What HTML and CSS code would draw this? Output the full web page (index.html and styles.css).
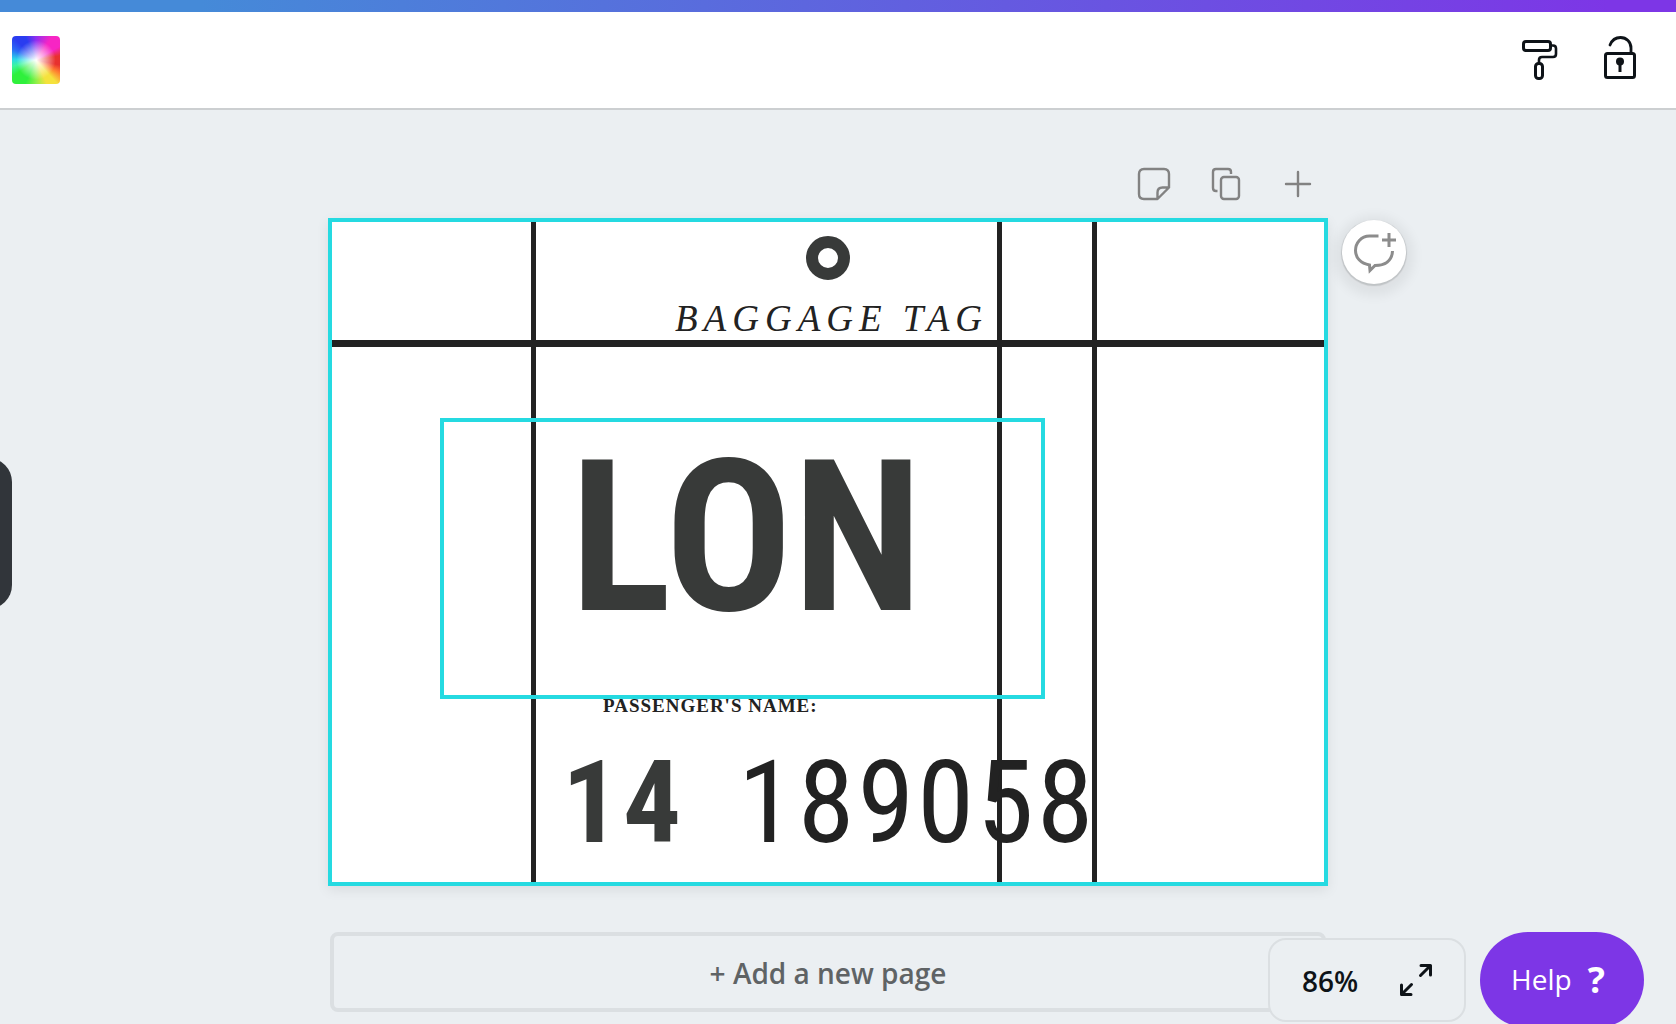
FILE: index.html
```html
<!DOCTYPE html>
<html lang="en">
<head>
  <meta charset="utf-8">
  <meta name="viewport" content="width=device-width, initial-scale=1">
  <title>Baggage tag</title>
  <link rel="stylesheet" href="styles.css">
</head>
<body>
  <div class="brand-bar"></div>
  <header class="toolbar">
    <button class="swatch" type="button" aria-label="Colour"></button>
    <div class="toolbar-actions">
      <button class="icon-button" type="button" aria-label="Copy style">
        <svg width="48" height="48" viewBox="0 0 48 48" fill="none" stroke="#0e1318" stroke-width="3">
          <rect x="7.500" y="5.500" width="27" height="9" rx="2.500"/>
          <path d="M35 9.500h2q3 0 3 3v5.500q0 3-3 3H26q-3 0-3 3v4" stroke-width="2.600"/>
          <rect x="19.500" y="27.500" width="7" height="15" rx="3"/>
        </svg>
      </button>
      <button class="icon-button" type="button" aria-label="Lock">
        <svg width="48" height="48" viewBox="0 0 48 48" fill="none" stroke="#0e1318" stroke-width="3">
          <rect x="9.500" y="17.500" width="29" height="24" rx="2"/>
          <path d="M14 9C16 4 20 1.500 24.500 1.500c6 0 10.500 4.500 10.500 10.500v5" stroke-width="2.800" stroke-linecap="round"/>
          <circle cx="24" cy="25.500" r="4" fill="#0e1318" stroke="none"/>
          <path d="M24 26v10"/>
        </svg>
      </button>
    </div>
  </header>

  <button class="side-tab" type="button" aria-label="Toggle side panel"></button>

  <main class="workspace">
    <section class="sheet">
      <div class="page-tools">
        <button class="tool-button" type="button" aria-label="Add notes">
          <svg width="40" height="40" viewBox="0 0 40 40" fill="none" stroke="#828282" stroke-width="2.400">
            <path d="M35 24v-14q0-5-5-5H10q-5 0-5 5v20q0 5 5 5h13.500L35 23.500h-6.500q-5 0-5 5v6" stroke-linejoin="round"/>
          </svg>
        </button>
        <button class="tool-button" type="button" aria-label="Copy page">
          <svg width="40" height="40" viewBox="0 0 40 40" fill="none" stroke="#828282" stroke-width="2.400">
            <path d="M25 10V8q0-3-3-3H10Q7 5 7 8v16q0 3 3 3h1.500"/>
            <rect x="15" y="13" width="18" height="22" rx="3"/>
          </svg>
        </button>
        <button class="tool-button" type="button" aria-label="Add page">
          <svg width="40" height="40" viewBox="0 0 40 40" fill="none" stroke="#828282" stroke-width="2.400" stroke-linecap="round">
            <path d="M8 20h24M20 8v24"/>
          </svg>
        </button>
      </div>

      <div class="canvas">
        <div class="rule rule-left"></div>
        <div class="rule rule-middle"></div>
        <div class="rule rule-right"></div>
        <div class="rule-across"></div>
        <div class="ring"></div>
        <div class="text tag-title">BAGGAGE TAG</div>
        <div class="text passenger">PASSENGER'S NAME:</div>
        <div class="text code">LON</div>
        <div class="text number number-short">14</div>
        <div class="text number number-long">189058</div>
        <div class="selection"></div>
        <button class="comment-button" type="button" aria-label="Add comment">
          <svg width="44" height="44" viewBox="0 0 44 44" fill="none" stroke="#8c8c8c" stroke-width="3">
            <path d="M26.500 6H17.500C9 6 3.500 13 3.500 20.500c0 7 5 13 14 14.500l.500 5.500 5-5C33 35.500 40 31 40.500 21"/>
            <path d="M30 10h14M37 3v14"/>
          </svg>
        </button>
      </div>

      <button class="add-page" type="button">+ Add a new page</button>
    </section>
  </main>

  <div class="dock">
    <div class="zoom-panel">
      <button class="zoom-value" type="button">86%</button>
      <button class="expand" type="button" aria-label="Full screen">
        <svg width="32" height="32" viewBox="0 0 32 32" fill="none" stroke="#0e1318" stroke-width="3" stroke-linecap="round" stroke-linejoin="round">
          <path d="M20.500 11.500 30 2M21 1.500h9.500V11M11.500 20.500 2 30M1.500 21v9.500H11"/>
        </svg>
      </button>
    </div>
    <button class="help" type="button">Help <span class="help-mark">?</span></button>
  </div>
</body>
</html>
```

FILE: styles.css
```css
* {
  box-sizing: border-box;
}

body {
  margin: 0;
  min-height: 100vh;
  background: #ebeff2;
  color: #0e1318;
  font-family: "Open Sans", "Noto Sans", sans-serif;
  font-size: 28px;
}

button {
  margin: 0;
  padding: 0;
  border: 0;
  background: none;
  color: inherit;
  font: inherit;
  cursor: pointer;
}

svg {
  display: block;
  overflow: visible;
}

.brand-bar {
  height: 12px;
  background: linear-gradient(90deg, #458ad8 12%, #7d36e6 96%);
}

.toolbar {
  display: flex;
  align-items: center;
  justify-content: space-between;
  height: 98px;
  padding: 0 32px 0 12px;
  border-bottom: 2px solid #cccfd1;
  background: #fff;
}

.swatch {
  width: 48px;
  height: 48px;
  border-radius: 4px;
  background:
    radial-gradient(circle, #fff 0, rgba(255, 255, 255, 0.6) 24%, transparent 58%),
    conic-gradient(#8f2ff0, #f725c4 35deg, #f725c4 60deg, #e8312e 80deg, #e8312e 102deg, #ff7a30 118deg, #f5e23c 138deg, #f5e23c 155deg, #8df04a 180deg, #2ff03c 205deg, #2ff03c 235deg, #3cf5a0 255deg, #2ad8e8 272deg, #2a6cf5 295deg, #2a3cf0 315deg, #2a3cf0 335deg, #8f2ff0);
}

.toolbar-actions {
  display: flex;
  gap: 32px;
}

.side-tab {
  position: fixed;
  top: 458px;
  left: -48px;
  width: 60px;
  height: 151px;
  border-radius: 24px;
  background: #31353a;
}

.workspace {
  display: flex;
  justify-content: center;
  padding: 54px 20px 12px 0;
}

.sheet {
  width: 1000px;
}

.page-tools {
  display: flex;
  justify-content: flex-end;
  gap: 32px;
  padding: 0 10px 14px;
}

/* Free canvas: every element of the design has its own place */
.canvas {
  position: relative;
  height: 668px;
  border: 4px solid #25dae1;
  background: #fff;
  box-shadow: 0 4px 12px rgba(14, 19, 24, 0.08);
}

.rule {
  position: absolute;
  top: 0;
  bottom: 0;
  width: 5px;
  background: #222;
}

.rule-left {
  left: 199px;
}

.rule-middle {
  left: 665px;
}

.rule-right {
  left: 760px;
}

.rule-across {
  position: absolute;
  top: 118px;
  left: 0;
  right: 0;
  height: 7px;
  background: #222;
}

.ring {
  position: absolute;
  top: 14px;
  left: 474px;
  width: 44px;
  height: 44px;
  border: 12px solid #383a39;
  border-radius: 50%;
}

.text {
  position: absolute;
  color: #222;
  line-height: 1;
  white-space: nowrap;
}

.tag-title {
  top: 78px;
  left: 343px;
  font-family: "Liberation Serif", serif;
  font-size: 37px;
  font-style: italic;
  letter-spacing: 6px;
}

.passenger {
  top: 474px;
  left: 271px;
  font-family: "Liberation Serif", serif;
  font-size: 19px;
  font-weight: 700;
  letter-spacing: 1px;
}

.code {
  top: 210px;
  left: 238px;
  color: #383a39;
  font-family: "Roboto Condensed", "Liberation Sans Narrow", sans-serif;
  font-size: 212px;
  font-weight: 700;
}

.number {
  top: 523px;
  font-family: "Roboto Condensed", "Liberation Sans Narrow", sans-serif;
  font-size: 115px;
  letter-spacing: 3px;
}

.number-short {
  left: 230px;
  color: #383a39;
  font-weight: 700;
}

.number-long {
  left: 406px;
}

.selection {
  position: absolute;
  top: 196px;
  left: 108px;
  width: 605px;
  height: 281px;
  border: 4px solid #25dae1;
}

.comment-button {
  position: absolute;
  top: -2px;
  right: -82px;
  display: grid;
  place-items: center;
  width: 64px;
  height: 64px;
  border-radius: 50%;
  background: #fff;
  box-shadow: 0 1px 1px 1px rgba(14, 19, 24, 0.14), 0 4px 12px 8px rgba(14, 19, 24, 0.06);
}

.add-page {
  display: block;
  width: calc(100% - 4px);
  height: 80px;
  margin: 46px auto 0;
  padding-top: 2px;
  border: 4px solid #dbdfe2;
  border-radius: 8px;
  color: #5f6365;
  font-weight: 600;
}

.dock {
  position: fixed;
  right: 32px;
  bottom: -4px;
  display: flex;
  align-items: center;
  gap: 14px;
}

.zoom-panel {
  display: flex;
  align-items: center;
  justify-content: space-between;
  width: 198px;
  height: 84px;
  padding: 0 32px;
  border: 2px solid #dbdfe2;
  border-radius: 18px;
  background: #ebeff2;
}

.zoom-value {
  padding-top: 2px;
  font-weight: 600;
}

.help {
  display: flex;
  align-items: center;
  justify-content: center;
  gap: 16px;
  width: 164px;
  height: 96px;
  padding: 0 8px 2px 0;
  border-radius: 48px;
  background: #7d36e6;
  color: #fff;
}

.help-mark {
  font-size: 36px;
  font-weight: 700;
}
```
